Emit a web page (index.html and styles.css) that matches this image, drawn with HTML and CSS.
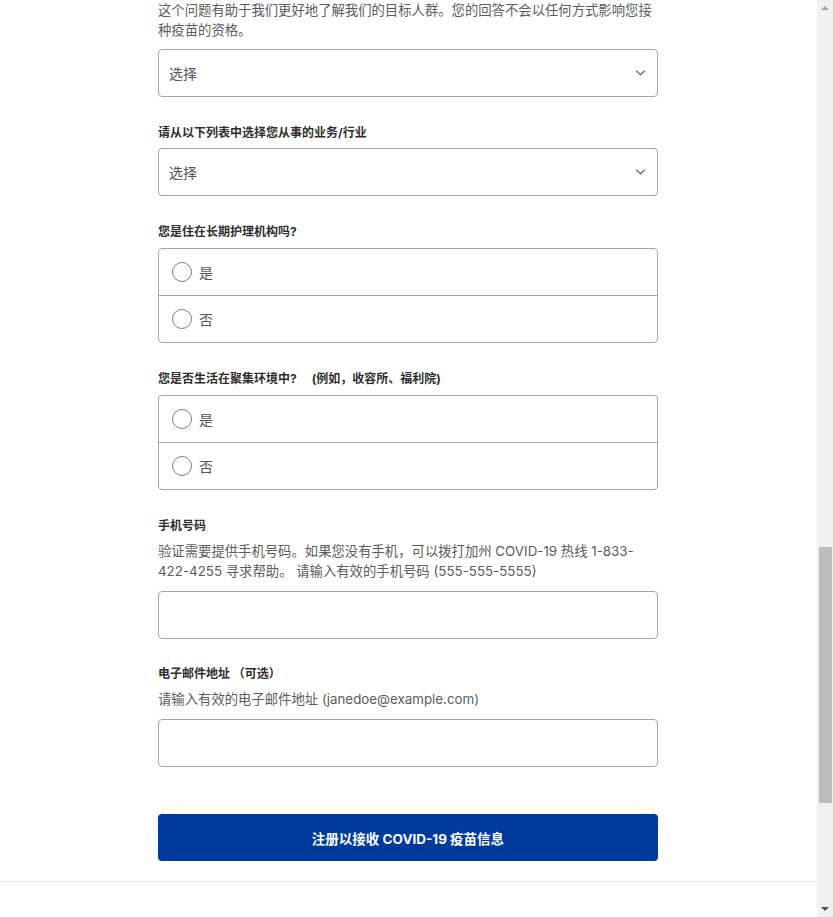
FILE: index.html
```html
<!DOCTYPE html>
<html lang="zh-CN">
<head>
<meta charset="UTF-8" />
<meta name="viewport" content="width=device-width, initial-scale=1" />
<title>COVID-19 疫苗信息注册</title>
<link rel="stylesheet" href="styles.css">
</head>
<body>
  <form class="signup-form">
    <div class="field">
      <p class="help help-top">这个问题有助于我们更好地了解我们的目标人群。您的回答不会以任何方式影响您接种疫苗的资格。</p>
      <div class="select-wrap">
        <select class="select" aria-label="选择">
          <option>选择</option>
        </select>
        <svg class="chevron" viewBox="0 0 12 8" aria-hidden="true" focusable="false">
          <path d="M1.5 1.5L6 6l4.5-4.5" fill="none" stroke="#6b6e75" stroke-width="1.6" />
        </svg>
      </div>
    </div>

    <div class="field">
      <label class="label">请从以下列表中选择您从事的业务/行业</label>
      <div class="select-wrap">
        <select class="select" aria-label="选择">
          <option>选择</option>
        </select>
        <svg class="chevron" viewBox="0 0 12 8" aria-hidden="true" focusable="false">
          <path d="M1.5 1.5L6 6l4.5-4.5" fill="none" stroke="#6b6e75" stroke-width="1.6" />
        </svg>
      </div>
    </div>

    <fieldset class="field">
      <legend class="label legend">您是住在长期护理机构吗?</legend>
      <div class="radio-group">
        <label class="radio-row"><input type="radio" name="ltc" class="radio"> 是</label>
        <label class="radio-row"><input type="radio" name="ltc" class="radio"> 否</label>
      </div>
    </fieldset>

    <fieldset class="field">
      <legend class="label legend">您是否生活在聚集环境中?<span class="aside">(例如，收容所、福利院)</span></legend>
      <div class="radio-group">
        <label class="radio-row"><input type="radio" name="congregate" class="radio"> 是</label>
        <label class="radio-row"><input type="radio" name="congregate" class="radio"> 否</label>
      </div>
    </fieldset>

    <div class="field">
      <label class="label" for="phone">手机号码</label>
      <p class="help">验证需要提供手机号码。如果您没有手机，可以拨打加州 COVID-19 热线 1-833-422-4255 寻求帮助。 请输入有效的手机号码 (555-555-5555)</p>
      <input id="phone" class="input" type="tel">
    </div>

    <div class="field field-email">
      <label class="label" for="email">电子邮件地址 （可选）</label>
      <p class="help">请输入有效的电子邮件地址 (janedoe@example.com)</p>
      <input id="email" class="input" type="email">
    </div>

    <button type="button" class="submit">注册以接收 COVID-19 疫苗信息</button>
  </form>

  <footer class="footer"></footer>

  <!-- window scrollbar as seen in the capture -->
  <div class="scrollbar" aria-hidden="true">
    <span class="scroll-arrow up"></span>
    <span class="scroll-thumb"></span>
    <span class="scroll-arrow down"></span>
  </div>
</body>
</html>
```

FILE: styles.css
```css
/* Reset */
* {
  margin: 0;
  padding: 0;
  box-sizing: border-box;
}

body {
  background: #fff;
  font-family: "Inter", "Noto Sans CJK SC", sans-serif;
  color: #333;
  padding-right: 17px;
}

.signup-form {
  width: 500px;
  margin: 0 auto;
  display: flex;
  flex-direction: column;
}

.field {
  border: none;
  margin-bottom: 27px;
  min-width: 0;
}

.field-email {
  margin-top: -1px;
}

.label {
  display: block;
  font-size: 12px;
  line-height: 18px;
  font-weight: 700;
  color: #2e2e2e;
  margin-bottom: 6px;
  padding: 0;
}

.legend {
  margin-bottom: 7px;
}

.aside {
  margin-left: 15px;
}

.help {
  font-size: 13.35px;
  line-height: 20px;
  color: #5c5c5c;
  margin-bottom: 10px;
}

.help-top {
  margin-bottom: 9px;
}

/* Select boxes */
.select-wrap {
  position: relative;
}

.select {
  appearance: none;
  -webkit-appearance: none;
  width: 100%;
  height: 48px;
  padding: 0 10px;
  font-family: inherit;
  font-size: 14px;
  color: #555;
  background: #fff;
  border: 1px solid #a2a5ad;
  border-radius: 4px;
}

.chevron {
  position: absolute;
  right: 12px;
  top: 20px;
  width: 11px;
  height: 8px;
  pointer-events: none;
}

/* Radio groups */
.radio-group {
  border: 1px solid #a2a5ad;
  border-radius: 4px;
  display: flex;
  flex-direction: column;
}

.radio-row {
  height: 46px;
  display: flex;
  align-items: center;
  gap: 7px;
  padding-left: 13px;
  font-size: 14px;
  color: #555;
}

.radio-row + .radio-row {
  border-top: 1px solid #a2a5ad;
  height: 47px;
}

.radio {
  appearance: none;
  -webkit-appearance: none;
  width: 20px;
  height: 20px;
  border: 1.5px solid #7a7d84;
  border-radius: 50%;
  background: #fff;
}

/* Text inputs */
.input {
  width: 100%;
  height: 48px;
  border: 1px solid #a2a5ad;
  border-radius: 4px;
  padding: 0 10px;
  font-family: inherit;
  font-size: 14px;
}

.submit {
  margin-top: 20px;
  height: 47px;
  width: 100%;
  border: none;
  border-radius: 4px;
  background: #003b9c;
  color: #fff;
  font-family: inherit;
  font-size: 13.5px;
  font-weight: 700;
  cursor: pointer;
}

.footer {
  margin-top: 20px;
  border-top: 1px solid #e3e3e3;
  height: 36px;
}

/* Scrollbar */
.scrollbar {
  position: fixed;
  top: 0;
  right: 0;
  width: 16px;
  height: 100vh;
  background: #f1f1f1;
}

.scroll-thumb {
  position: absolute;
  left: 2px;
  top: 547px;
  width: 13px;
  height: 256px;
  background: #bcbcbc;
}

.scroll-arrow {
  position: absolute;
  left: 4px;
  width: 0;
  height: 0;
  border-left: 4px solid transparent;
  border-right: 4px solid transparent;
}

.scroll-arrow.up {
  top: 6px;
  border-bottom: 4px solid #a3a3a3;
}

.scroll-arrow.down {
  bottom: 6px;
  border-top: 4px solid #505050;
}
```
